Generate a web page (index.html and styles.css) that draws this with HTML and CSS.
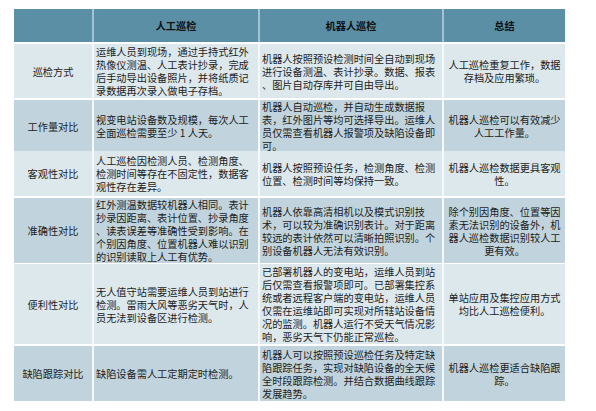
FILE: index.html
```html
<!DOCTYPE html>
<html lang="zh-CN">
<head>
<meta charset="utf-8">
<title>人工巡检与机器人巡检对比</title>
<link rel="stylesheet" href="styles.css">
</head>
<body>
<div class="table">
  <div class="head">
    <div class="hc"></div>
    <div class="hc">人工巡检</div>
    <div class="hc">机器人巡检</div>
    <div class="hc">总结</div>
  </div>
  <div class="body">
    <div class="row light r1">
      <div class="c k">巡检方式</div>
      <div class="c t">运维人员到现场，通过手持式红外<br>热像仪测温、人工表计抄录，完成<br>后手动导出设备照片，并将纸质记<br>录数据再次录入做电子存档。</div>
      <div class="c t">机器人按照预设检测时间全自动到现场<br>进行设备测温、表计抄录。数据、报表<br>、图片自动存库并可自由导出。</div>
      <div class="c s">人工巡检重复工作，数据<br>存档及应用繁琐。</div>
    </div>
    <div class="row dark r2">
      <div class="c k">工作量对比</div>
      <div class="c t">视变电站设备数及规模，每次人工<br>全面巡检需要至少 1 人天。</div>
      <div class="c t">机器人自动巡检，并自动生成数据报<br>表，红外图片等均可选择导出。运维人<br>员仅需查看机器人报警项及缺陷设备即<br>可。</div>
      <div class="c s">机器人巡检可以有效减少<br>人工工作量。</div>
    </div>
    <div class="row light r3">
      <div class="c k">客观性对比</div>
      <div class="c t">人工巡检因检测人员、检测角度、<br>检测时间等存在不固定性，数据客<br>观性存在差异。</div>
      <div class="c t">机器人按照预设任务，检测角度、检测<br>位置、检测时间等均保持一致。</div>
      <div class="c s">机器人巡检数据更具客观<br>性。</div>
    </div>
    <div class="row dark r4">
      <div class="c k">准确性对比</div>
      <div class="c t">红外测温数据较机器人相同。表计<br>抄录因距离、表计位置、抄录角度<br>、读表误差等准确性受到影响。在<br>个别因角度、位置机器人难以识别<br>的识别读取上人工有优势。</div>
      <div class="c t">机器人依靠高清相机以及模式识别技<br>术，可以较为准确识别表计。对于距离<br>较远的表计依然可以清晰拍照识别。个<br>别设备机器人无法有效识别。</div>
      <div class="c s">除个别因角度、位置等因<br>素无法识别的设备外，机<br>器人巡检数据识别较人工<br>更有效。</div>
    </div>
    <div class="row light r5">
      <div class="c k">便利性对比</div>
      <div class="c t">无人值守站需要运维人员到站进行<br>检测。雷雨大风等恶劣天气时，人<br>员无法到设备区进行检测。</div>
      <div class="c t">已部署机器人的变电站，运维人员到站<br>后仅需查看报警项即可。已部署集控系<br>统或者远程客户端的变电站，运维人员<br>仅需在运维站即可实现对所辖站设备情<br>况的监测。机器人运行不受天气情况影<br>响，恶劣天气下仍能正常巡检。</div>
      <div class="c s">单站应用及集控应用方式<br>均比人工巡检便利。</div>
    </div>
    <div class="row dark r6">
      <div class="c k">缺陷跟踪对比</div>
      <div class="c t">缺陷设备需人工定期定时检测。</div>
      <div class="c t">机器人可以按照预设巡检任务及特定缺<br>陷跟踪任务，实现对缺陷设备的全天候<br>全时段跟踪检测。并结合数据曲线跟踪<br>发展趋势。</div>
      <div class="c s">机器人巡检更适合缺陷跟<br>踪。</div>
    </div>
  </div>
</div>
</body>
</html>
```
FILE: styles.css
```css
html, body {
  margin: 0;
  padding: 0;
  background: #ffffff;
}
body {
  padding: 9px 0 0 14px;
  font-family: "Noto Sans CJK SC", "Noto Sans", sans-serif;
  font-size: 10.2px;
  line-height: 13px;
  color: #1c1c1c;
}
.table {
  width: 551px;
}
.head, .row {
  display: grid;
  grid-template-columns: 78px 164px 182px 121px;
  column-gap: 2px;
}
.head {
  height: 33px;
  background: #a3c3d0;
}
.hc {
  background: #5b8fa6;
  display: flex;
  align-items: center;
  justify-content: center;
  font-weight: bold;
  color: #111111;
}
.body {
  display: flex;
  flex-direction: column;
  row-gap: 2px;
  margin-top: 2px;
}
.row {
  background: #f4f8fa;
}
.c {
  display: flex;
  align-items: center;
  white-space: nowrap;
}
.light .c { background: #dde8ed; }
.dark .c { background: #c1d4dd; }
.k {
  justify-content: center;
}
.t {
  padding-left: 2px;
}
.s {
  justify-content: center;
  text-align: center;
}
.r1 { height: 54px; }
.r2 { height: 49px; }
.r3 { height: 45px; }
.r4 { height: 64px; }
.r5 { height: 80px; }
.r6 { height: 55px; }
```
